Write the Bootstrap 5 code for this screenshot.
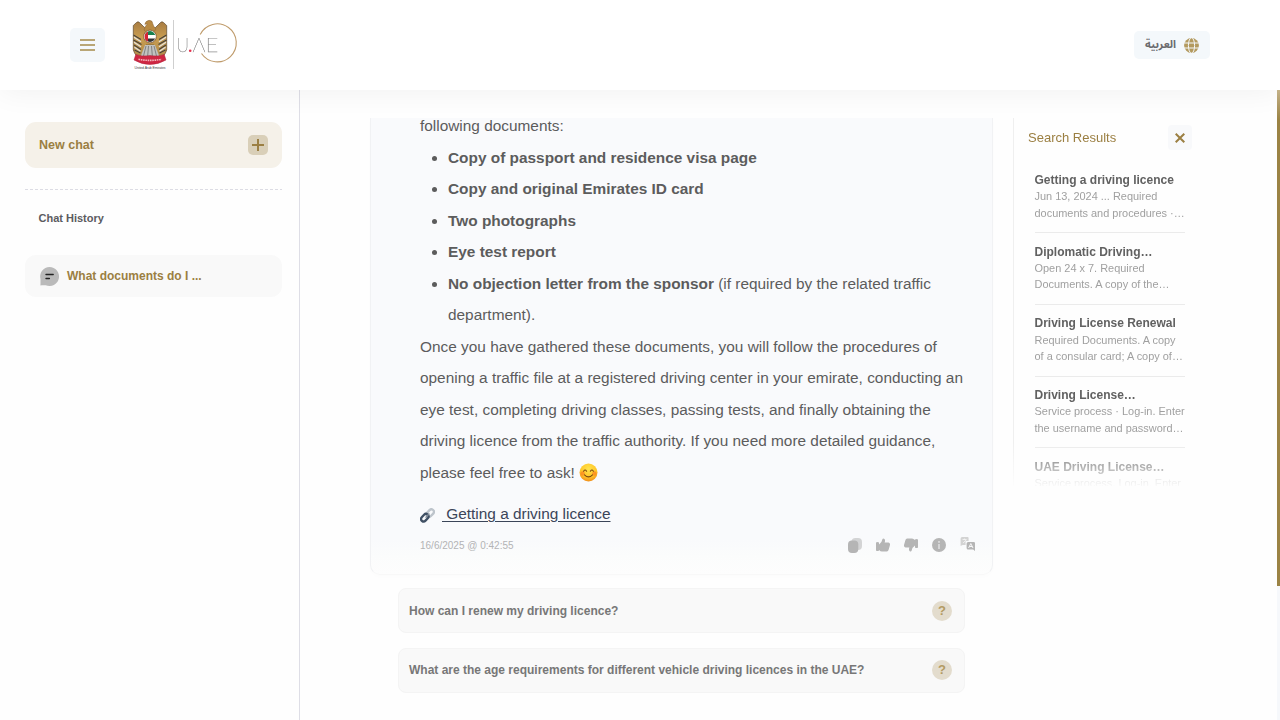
<!DOCTYPE html>
<html lang="en">
<head>
<meta charset="utf-8">
<meta name="viewport" content="width=device-width, initial-scale=1">
<title>U.AE Chat</title>
<link href="https://cdn.jsdelivr.net/npm/bootstrap@5.3.0/dist/css/bootstrap.min.css" rel="stylesheet">
<style>
  body { font-family: "Liberation Sans", Arial, sans-serif; color: #5c5c5c; background: #fefefe; height: 100vh; }
  svg { display: block; flex: none; }
  .topbar { height: 90px; padding: 0 70px; background: #fff; box-shadow: 0 2px 30px rgba(0,0,0,.055); z-index: 2; position: relative; }
  .menu-btn { width: 35px; height: 34px; border-radius: 5px; background: #f4f8fb; border: 0; }
  .lang-btn { width: 76px; height: 28px; border-radius: 5px; background: #f4f8fb; border: 0; padding: 0 11px 0 0; color: #6b6b6e; }
  .lang-btn span { font: 700 11px/16px "Noto Sans Arabic", "DejaVu Sans", sans-serif; }
  .sidebar { width: 300px; border-right: 1px solid #dedee6; padding: 32px 17px 0 25px; }
  .new-chat { height: 46px; border-radius: 11px; background: #f5f1e9; color: #9b7f42; font-size: 12.5px; font-weight: 700; padding: 0 14px; }
  .plus { width: 20px; height: 20px; border-radius: 5px; background: #d9cfb8; }
  .dash { height: 1px; margin-top: 21px; background: repeating-linear-gradient(90deg, #dcdce4 0 3px, transparent 3px 5px); }
  .hist-title { font-size: 11px; font-weight: 700; color: #5b5b60; margin: 20px 0 0 13.5px; line-height: 17px; }
  .hist-item { height: 42px; margin-top: 28px; border-radius: 11px; background: #f9f9f9; color: #9b7f42; font-size: 12px; font-weight: 700; padding: 0 15px; }
  .chat-col { width: 623px; margin-left: 70px; padding-top: 28px; }
  .answer { height: 457px; border: 1px solid #f1f2f4; border-top: 0; border-radius: 0 0 10px 10px; overflow: hidden; padding: 0 17px 0 49px; border-bottom-color: #f8f8f8;
    background: linear-gradient(#f9fafc 0 422px, #fbfcfc 438px, #fdfdfd 457px); box-shadow: 0 2px 4px rgba(0,0,0,.01); }
  .answer-text { font-size: 15.4px; line-height: 31.5px; margin-top: -8px; white-space: nowrap; }
  .answer-text ul { padding-left: 28px; margin: 0; }
  .src { font-size: 15.4px; line-height: 22px; margin-top: 15px; color: #3b4559; }
  .src a { color: #3b4559; white-space: pre; text-underline-offset: 2px; margin-left: 7px; }
  .meta-row { margin-top: 12px; }
  .stamp { font-size: 10px; color: #b3b3b5; }
  .tools { gap: 14px; color: #b5b5b5; }
  .asks { margin: 13px 28px 0; gap: 15px; }
  .ask { height: 45px; border: 1px solid #f4f4f4; border-radius: 8px; background: #f9f9f9; color: #777; font-size: 12px; font-weight: 700; padding: 0 12px 0 10px; }
  .ask:last-child { padding-bottom: 1px; }
  .q-mark { width: 20px; height: 20px; background: #e3dccd; color: #b39b62; font-size: 13px; line-height: 20px; text-align: center; }
  .results { width: 180px; height: 368px; margin: 28px 0 0 20px; border-left: 1px solid #efefef; overflow: hidden; padding-left: 14px;
    -webkit-mask-image: linear-gradient(#000 325px, transparent 371px); mask-image: linear-gradient(#000 325px, transparent 371px); }
  .res-head { height: 25px; margin-top: 7px; font-size: 13px; color: #9b7f42; width: 164px; }
  .close-btn { width: 24px; height: 25px; border: 0; border-radius: 4px; background: #f8f9fb; }
  .res-list { margin: 12px 0 0 6.5px; width: 150px; }
  .res-item { height: 70px; padding-top: 10px; white-space: nowrap; }
  .res-item + .res-item { border-top: 1px solid #ebebeb; height: 71.8px; }
  .res-item h3 { font-size: 12px; line-height: 17px; font-weight: 700; margin: 0; color: #616161; }
  .res-item:nth-child(n+2) h3 { margin-top: .6px; }
  .res-item p { font-size: 10.95px; line-height: 16.4px; margin: -.8px 0 0; color: #a0a0a0; }
  .page-thumb { right: 0; top: 90px; width: 3px; height: 496px; background: linear-gradient(#c3b188, #9b8344 30px); z-index: 3; }
  .page-track { right: 0; top: 586px; width: 3px; bottom: 0; background: #f6f8fb; }
</style>
</head>
<body class="d-flex flex-column overflow-hidden position-relative">
<header class="topbar d-flex align-items-center flex-shrink-0">
  <button class="menu-btn d-flex align-items-center justify-content-center p-0" aria-label="Menu">
    <svg width="15" height="12" viewBox="0 0 15 12"><path d="M0 1h15M0 6h15M0 11h15" stroke="#a58a4b" stroke-width="1.400"/></svg>
  </button>
  <svg class="ms-4" width="112" height="52" viewBox="129 19 112 52" aria-label="U.AE">
    <defs>
      <linearGradient id="gold" x1="0" y1="0" x2="0" y2="1"><stop offset="0" stop-color="#a87c42"/><stop offset=".45" stop-color="#c99d50"/><stop offset="1" stop-color="#b08a4a"/></linearGradient>
      <clipPath id="disc"><circle cx="150" cy="36.500" r="5.400"/></clipPath>
    </defs>
    <!-- falcon wings -->
    <path d="M144.500 27.500L139.500 22.500Q138 21 136.500 22.500L133.300 25.500V50Q136 58 141 57.500L146 45H154L159 57.500Q164 58 166.700 50V25.500L163.500 22.500Q162 21 160.500 22.500L155.500 27.500Q150 30 144.500 27.500Z" fill="url(#gold)" stroke="#5f4b2f" stroke-width=".7"/>
    <path d="M133.500 35l7.500 4.500M133.500 40l8 4.500M134 45l7 4.500M134.500 50l6 3M166.500 35l-7.500 4.500M166.500 40l-8 4.500M166 45l-7 4.500M165.500 50l-6 3" stroke="#44413c" stroke-width="1.100"/>
    <path d="M134 37.300l7 4.500M134 42.300l7 4.500M134.500 47.300l6 4M166 37.300l-7 4.500M166 42.300l-7 4.500M165.500 47.300l-6 4" stroke="#e2e2df" stroke-width="1.300"/>
    <path d="M144 30Q145 25.500 147.500 24L144.800 24.300Q145.500 21 149 20.300Q152.500 20.300 152.700 23.500Q153 26 156 29L153 33H147Z" fill="#b98a43" stroke="#86623a" stroke-width=".5"/>
    <!-- tail -->
    <path d="M145 45L140 58H160L155 45Z" fill="#c2c2c0"/>
    <path d="M146 46l-3 12M148.500 46l-1 12M151.500 46l1 12M154 46l3 12" stroke="#666" stroke-width=".7"/>
    <circle cx="150" cy="36.500" r="6.400" fill="#eee" stroke="#805529" stroke-width=".8"/>
    <g clip-path="url(#disc)"><path fill="#fff" d="M144 31h12v12h-12z"/><path fill="#168050" d="M145 31h11v4h-11z"/><path fill="#333" d="M145 38.500h11v4h-11z"/><path fill="#d52537" d="M144 31h4v11h-4z"/></g>
    <!-- ribbon -->
    <path d="M135.800 54.500Q142 57 150 55.500Q158 57 164.200 54.500L166 60Q158 64.500 150 64.500Q142 64.500 134 60Z" fill="#ce2743" stroke="#b0203a" stroke-width=".5"/>
    <path d="M138.500 59.300Q150 61.500 161.500 59.300" stroke="#f3b5bb" stroke-width="1.600" stroke-dasharray="1.600 .7" fill="none"/>
    <text x="134.500" y="69" font-size="3.500" fill="#444" textLength="31" font-family="Liberation Sans">United Arab Emirates</text>
    <path d="M173.500 20v49" stroke="#cfcfcf"/>
    <path d="M200.200 34.500A19 19 0 1 1 201.500 53.500" fill="none" stroke="#bf9b6b" stroke-width="1.100"/>
    <g font-family="Lato" font-weight="100" font-size="19" fill="#808080" stroke="#808080" stroke-width=".25" opacity=".95">
      <text x="176.500" y="51.800" textLength="12.500" lengthAdjust="spacingAndGlyphs">U</text>
      <text x="192.500" y="51.800" textLength="13" lengthAdjust="spacingAndGlyphs">Λ</text>
      <text x="205.500" y="51.800" textLength="13" lengthAdjust="spacingAndGlyphs">E</text>
    </g>
    <circle cx="190.200" cy="50.800" r="1.300" fill="#e6304d"/>
  </svg>
  <button class="lang-btn d-flex align-items-center justify-content-end gap-2 ms-auto">
    <span lang="ar" dir="rtl">العربية</span>
    <svg width="15" height="15" viewBox="0 0 15 15"><circle cx="7.500" cy="7.500" r="7.400" fill="#b39a5f"/><path d="M0 5h15M0 10h15" stroke="#f4f8fb" stroke-width="1"/><ellipse cx="7.500" cy="7.500" rx="3.100" ry="7.700" fill="none" stroke="#f4f8fb"/></svg>
  </button>
</header>

<div class="d-flex flex-grow-1">
  <aside class="sidebar flex-shrink-0">
    <div class="new-chat d-flex align-items-center justify-content-between">
      <span>New chat</span>
      <span class="plus d-flex align-items-center justify-content-center"><svg width="12" height="12"><path d="M6 0v12M0 6h12" stroke="#9b7f42" stroke-width="2"/></svg></span>
    </div>
    <div class="dash"></div>
    <h2 class="hist-title">Chat History</h2>
    <div class="hist-item d-flex align-items-center gap-2">
      <svg width="19" height="19" viewBox="0 0 19 19"><path d="M9.500 0a9.500 9.500 0 1 1-3.800 18.200H1.500Q0 19 .5 17.500V12A9.500 9.500 0 0 1 9.500 0Z" fill="#bababa"/><path d="M6 7.500h7.200M6 11.500h3.400" stroke="#222" stroke-width="1.400" stroke-linecap="round"/></svg>
      <span>What documents do I ...</span>
    </div>
  </aside>

  <main class="chat-col flex-shrink-0">
    <section class="answer">
      <div class="answer-text">
        following documents:
        <ul>
          <li><strong>Copy of passport and residence visa page</strong></li>
          <li><strong>Copy and original Emirates ID card</strong></li>
          <li><strong>Two photographs</strong></li>
          <li><strong>Eye test report</strong></li>
          <li><strong>No objection letter from the sponsor</strong> (if required by the related traffic<br>department).</li>
        </ul>
        <div>Once you have gathered these documents, you will follow the procedures of<br>
        opening a traffic file at a registered driving center in your emirate, conducting an<br>
        eye test, completing driving classes, passing tests, and finally obtaining the<br>
        driving licence from the traffic authority. If you need more detailed guidance,</div>
        <div class="d-flex align-items-center gap-1">please feel free to ask!
          <svg width="19" height="19" viewBox="0 0 19 19"><defs><radialGradient id="smile" cx=".5" cy=".3" r=".75"><stop offset="0" stop-color="#ffe44d"/><stop offset=".6" stop-color="#ffc528"/><stop offset="1" stop-color="#ee8318"/></radialGradient></defs><circle cx="9.500" cy="9.500" r="9" fill="url(#smile)"/><circle cx="3.600" cy="10.500" r="2.200" fill="#fb7d20" opacity=".65"/><circle cx="15.400" cy="10.500" r="2.200" fill="#fb7d20" opacity=".65"/><path d="M4.600 8.200q1.500-2.300 3 0M11.400 8.200q1.500-2.300 3 0M5.500 11.800q4 4.200 8 0" fill="none" stroke="#7c4a12" stroke-width="1.100" stroke-linecap="round"/></svg>
        </div>
      </div>
      <div class="src d-flex align-items-center">
        <svg class="mt-1" width="15" height="16" viewBox="0 0 16 17"><g fill="none" stroke-width="2.500"><rect x="6.400" y="2.700" width="9" height="5.400" rx="2.700" transform="rotate(-47 10.900 5.400)" stroke="#bdc4cb"/><rect x=".6" y="7.600" width="9" height="5.400" rx="2.700" transform="rotate(-47 5.100 10.300)" stroke="#405064"/><path d="M6 10.300l4-4.500" stroke="#7e8996" stroke-width="1.500"/></g></svg>
        <a href="#"> Getting a driving licence</a>
      </div>
      <div class="meta-row d-flex align-items-center justify-content-between">
        <span class="stamp">16/6/2025 @ 0:42:55</span>
        <div class="tools d-flex align-items-center">
          <svg width="14" height="15" viewBox="0 0 14 15" fill="currentColor"><rect x="3.500" width="10.500" height="12" rx="4" opacity=".55"/><rect y="2.500" width="10.300" height="12.500" rx="4"/></svg>
          <svg width="14" height="14" viewBox="0 0 14 14" fill="currentColor"><path d="M0 4.500Q1.500 3.500 3 4.500V12.500Q1.500 13.500 0 12.500Z"/><path d="M3 6.500Q6 4.500 6.300 1.500 7-.3 8.500 1q1 1.400.1 3.600H12.400Q14.300 4.800 14 7L12.700 11.500Q12.300 13.500 10.700 13.500H6Q4.500 13.500 3 12Z"/></svg>
          <svg width="14" height="14" viewBox="0 0 14 14" fill="currentColor"><g transform="rotate(180 7 7)"><path d="M0 4.500Q1.500 3.500 3 4.500V12.500Q1.500 13.500 0 12.500Z"/><path d="M3 6.500Q6 4.500 6.300 1.500 7-.3 8.500 1q1 1.400.1 3.600H12.400Q14.300 4.800 14 7L12.700 11.500Q12.300 13.500 10.700 13.500H6Q4.500 13.500 3 12Z"/></g></svg>
          <svg width="14" height="14" viewBox="0 0 14 14"><circle cx="7" cy="7" r="7" fill="currentColor"/><path d="M7 6v5" stroke="#e4e4e5" stroke-width="1.400"/><circle cx="7" cy="3.900" r=".9" fill="#e4e4e5"/></svg>
          <svg width="15" height="16" viewBox="-.6 0 15 16"><path d="M1.500 0H7q1 0 1 1v3H5v4H2l-2 1V1.500Q0 0 1.500 0Z" fill="#d3d3d3"/><path d="M2 2.500h4M4 1.500v1M5.500 3L2.500 6" stroke="#f7f7f8" stroke-width=".8"/><path d="M7.500 5H13q1.500 0 1.500 1.500V14L12.500 12.500H7.500Q6 12.500 6 11V6.500Q6 5 7.500 5Z" fill="currentColor"/><path d="M8 11l2.200-4.500L12.400 11M8.800 9.500h3" stroke="#f7f7f8" fill="none"/></svg>
        </div>
      </div>
    </section>
    <div class="asks d-flex flex-column">
      <div class="ask d-flex align-items-center justify-content-between"><span>How can I renew my driving licence?</span><span class="q-mark rounded-circle">?</span></div>
      <div class="ask d-flex align-items-center justify-content-between"><span>What are the age requirements for different vehicle driving licences in the UAE?</span><span class="q-mark rounded-circle">?</span></div>
    </div>
  </main>

  <aside class="results flex-shrink-0">
    <div class="res-head d-flex align-items-center justify-content-between"><span>Search Results</span>
      <button class="close-btn d-flex align-items-center justify-content-center p-0" aria-label="Close"><svg width="10" height="10"><path d="M.7.700l8.600 8.600M9.300.700L.7 9.300" stroke="#9b7f42" stroke-width="2"/></svg></button>
    </div>
    <div class="res-list">
      <article class="res-item"><h3>Getting a driving licence</h3><p>Jun 13, 2024 ... Required<br>documents and procedures ·…</p></article>
      <article class="res-item"><h3>Diplomatic Driving…</h3><p>Open 24 x 7. Required<br>Documents. A copy of the…</p></article>
      <article class="res-item"><h3>Driving License Renewal</h3><p>Required Documents. A copy<br>of a consular card; A copy of…</p></article>
      <article class="res-item"><h3>Driving License…</h3><p>Service process · Log-in. Enter<br>the username and password…</p></article>
      <article class="res-item"><h3>UAE Driving License…</h3><p>Service process. Log-in. Enter</p></article>
    </div>
  </aside>
</div>
<div class="page-thumb position-absolute"></div>
<div class="page-track position-absolute"></div>
<script src="https://cdn.jsdelivr.net/npm/bootstrap@5.3.0/dist/js/bootstrap.bundle.min.js"></script>
</body>
</html>
